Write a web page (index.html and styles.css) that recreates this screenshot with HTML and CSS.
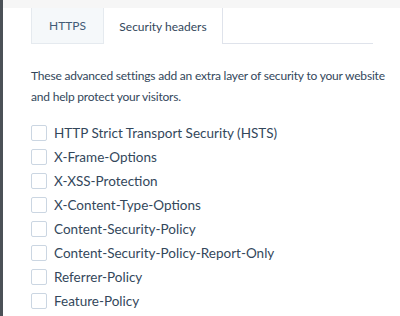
FILE: index.html
```html
<!DOCTYPE html>
<html lang="en">
<head>
  <meta charset="UTF-8">
  <title>Security headers</title>
  <link rel="stylesheet" href="styles.css">
</head>
<body>
  <div class="page">
    <div class="topbar"></div>
    <div class="content">
      <div class="tabs">
        <div class="tab">HTTPS</div>
        <div class="tab active">Security headers</div>
        <div class="tab-rest"></div>
      </div>
      <p class="intro">These advanced settings add an extra layer of security to your website<br>and help protect your visitors.</p>
      <ul class="options">
        <li><span class="box"></span>HTTP Strict Transport Security (HSTS)</li>
        <li><span class="box"></span>X-Frame-Options</li>
        <li><span class="box"></span>X-XSS-Protection</li>
        <li><span class="box"></span>X-Content-Type-Options</li>
        <li><span class="box"></span>Content-Security-Policy</li>
        <li><span class="box"></span>Content-Security-Policy-Report-Only</li>
        <li><span class="box"></span>Referrer-Policy</li>
        <li><span class="box"></span>Feature-Policy</li>
      </ul>
    </div>
  </div>
</body>
</html>
```

FILE: styles.css
```css
* {
  box-sizing: border-box;
}

body {
  margin: 0;
  font-family: Lato, "Open Sans", sans-serif;
  color: #33475b;
  background-color: #fff;
  height: 316px;
  overflow: hidden;
}

.page {
  border-left: 3px solid #4b5157;
  height: 316px;
}

.topbar {
  height: 8px;
  background-color: #f6f6f6;
}

.content {
  padding: 0 27px 0 28px;
}

.tabs {
  display: flex;
  height: 36px;
}

.tab {
  display: flex;
  align-items: center;
  justify-content: center;
  font-size: 12px;
  color: #425b76;
}

.tab:first-child {
  width: 73px;
  background-color: #f5f8fa;
  border: 1px solid #e5eaef;
  border-top: none;
}

.tab.active {
  width: 118px;
  background-color: #fff;
  color: #33475b;
}

.tab-rest {
  flex: 1;
  border-left: 1px solid #dfe3eb;
  border-bottom: 1px solid #dfe3eb;
}

.intro {
  margin: 21px 0 0;
  font-size: 12px;
  letter-spacing: -0.2px;
  line-height: 21px;
  white-space: nowrap;
}

.options {
  list-style: none;
  margin: 14px 0 0;
  padding: 0;
}

.options li {
  display: flex;
  align-items: center;
  height: 24px;
  font-size: 13.5px;
}

.box {
  width: 16px;
  height: 16px;
  border: 1px solid #cbd6e2;
  border-radius: 2px;
  margin-right: 7px;
  background-color: #fff;
}
```
